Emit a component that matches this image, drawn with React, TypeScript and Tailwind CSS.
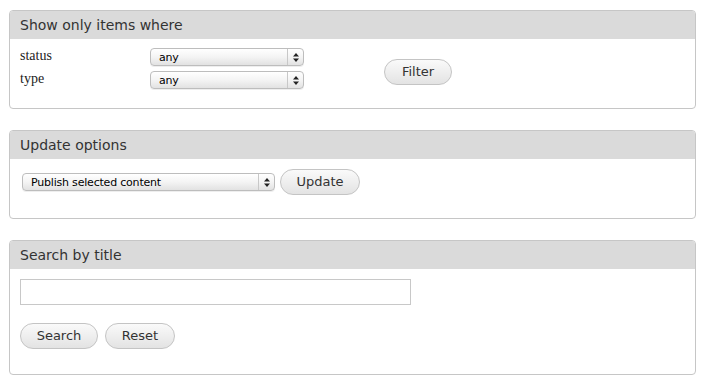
import type { ReactNode } from 'react'

const ui = { fontFamily: '"DejaVu Sans", "Liberation Sans", sans-serif' }
const serif = { fontFamily: '"Liberation Serif", "DejaVu Serif", serif' }

function Panel({ title, children, bodyClass }: { title: string; children: ReactNode; bodyClass: string }) {
  return (
    <div className="border border-[#c6c6c6] rounded-[4px] bg-white overflow-hidden">
      <div className="h-[28px] bg-[#dadada] px-[10px] flex items-center text-[14px] text-[#333]" style={ui}>
        {title}
      </div>
      <div className={bodyClass}>{children}</div>
    </div>
  )
}

function Select({ label, width }: { label: string; width: string }) {
  return (
    <div
      className={`${width} h-[18px] flex items-stretch rounded-[4px] border border-[#bdbdbd] bg-gradient-to-b from-white via-[#f4f4f4] to-[#e2e2e2] shadow-[0_1px_0_#eee]`}
      style={ui}
    >
      <div className="flex-1 flex items-center pl-[8px] text-[11px] tracking-[-0.2px] text-black leading-none">{label}</div>
      <div className="w-[16px] border-l border-[#c8c8c8] flex items-center justify-center">
        <svg width="6" height="9" viewBox="0 0 6 9">
          <path d="M3 0L6 3.5H0Z" fill="#222" />
          <path d="M3 9L6 5.5H0Z" fill="#222" />
        </svg>
      </div>
    </div>
  )
}

function Button({ label, width }: { label: string; width: string }) {
  return (
    <button
      className={`${width} h-[26px] rounded-full border border-[#c4c4c4] bg-gradient-to-b from-[#fafafa] to-[#e3e3e3] text-[13px] text-[#333] flex items-center justify-center`}
      style={ui}
    >
      {label}
    </button>
  )
}

export default function App() {
  return (
    <div className="w-[711px] h-[386px] bg-white pt-[10px] pl-[9px] pr-[15px] flex flex-col gap-[21px]">
      <Panel title="Show only items where" bodyClass="h-[69px] flex items-start pl-[10px] pt-[9px]">
        <div className="flex flex-col gap-[5px]">
          <div className="flex items-center">
            <span className="w-[130px] text-[14px] text-[#222] -mt-[3px]" style={serif}>status</span>
            <Select label="any" width="w-[154px]" />
          </div>
          <div className="flex items-center">
            <span className="w-[130px] text-[14px] text-[#222] -mt-[3px]" style={serif}>type</span>
            <Select label="any" width="w-[154px]" />
          </div>
        </div>
        <div className="ml-[80px] mt-[11px]">
          <Button label="Filter" width="w-[68px]" />
        </div>
      </Panel>

      <Panel title="Update options" bodyClass="h-[59px] flex items-start pl-[12px] pt-[10px] gap-[5px]">
        <div className="mt-[4px]">
          <Select label="Publish selected content" width="w-[253px]" />
        </div>
        <Button label="Update" width="w-[80px]" />
      </Panel>

      <Panel title="Search by title" bodyClass="h-[105px] flex flex-col pl-[10px] pt-[10px]">
        <input className="w-[391px] h-[26px] border border-[#c8c8c8] bg-white outline-none" />
        <div className="flex gap-[7px] mt-[18px]">
          <Button label="Search" width="w-[78px]" />
          <Button label="Reset" width="w-[70px]" />
        </div>
      </Panel>
    </div>
  )
}
